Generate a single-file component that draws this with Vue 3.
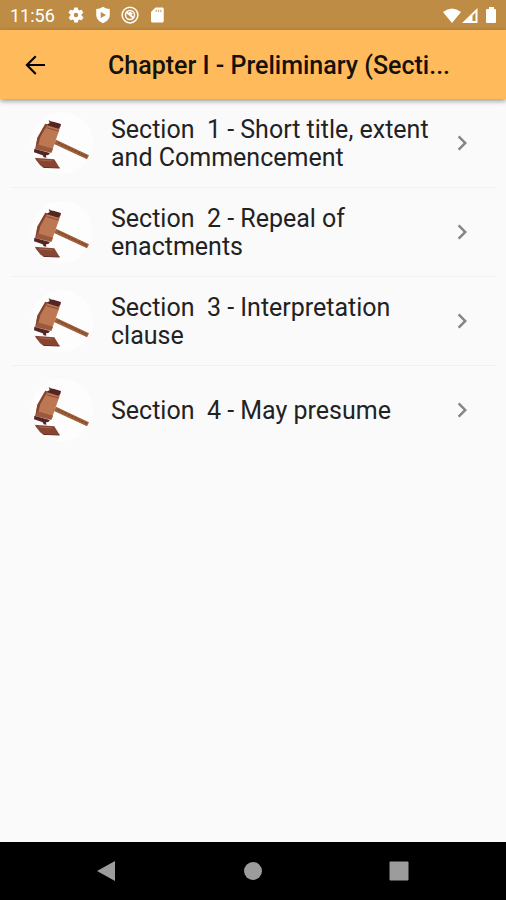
<script setup>
import {ref} from "vue";

const title = "Chapter I - Preliminary (Secti...";

const sections = ref([
    {id: 1, name: "Short title, extent and Commencement"},
    {id: 2, name: "Repeal of enactments"},
    {id: 3, name: "Interpretation clause"},
    {id: 4, name: "May presume"},
]);
</script>

<template>
    <div class="screen">
        <div class="status-bar">
            <span class="clock">11:56</span>
            <svg class="status-icon" viewBox="0 0 24 24">
                <path d="M19.4 13a7.5 7.5 0 0 0 0-2l2.1-1.6a.5.5 0 0 0 .1-.7l-2-3.4a.5.5 0 0 0-.6-.2l-2.5 1a7.3 7.3 0 0 0-1.7-1l-.4-2.6a.5.5 0 0 0-.5-.5h-4a.5.5 0 0 0-.5.5l-.4 2.6a7.3 7.3 0 0 0-1.7 1l-2.5-1a.5.5 0 0 0-.6.2l-2 3.4a.5.5 0 0 0 .1.7L4.6 11a7.5 7.5 0 0 0 0 2l-2.1 1.6a.5.5 0 0 0-.1.7l2 3.4c.1.2.4.3.6.2l2.5-1a7.3 7.3 0 0 0 1.7 1l.4 2.6c0 .3.2.5.5.5h4c.3 0 .5-.2.5-.5l.4-2.6a7.3 7.3 0 0 0 1.7-1l2.5 1c.2.1.5 0 .6-.2l2-3.4a.5.5 0 0 0-.1-.7zM12 15a3 3 0 1 1 0-6 3 3 0 0 1 0 6z"/>
            </svg>
            <svg class="status-icon" viewBox="0 0 24 24">
                <path fill-rule="evenodd" d="M12 1Q8 4 3 4v8c0 5 4 9 9 11 5-2 9-6 9-11V4q-5 0-9-3zM9 8v8l7-4z"/>
            </svg>
            <svg class="status-icon" viewBox="0 0 24 24">
                <g fill="none" stroke="#fff" stroke-width="2">
                    <circle cx="12" cy="12" r="10.5"/>
                    <circle cx="12" cy="12" r="6"/>
                    <path d="M7 8l10 8M11 8l4 3" stroke-width="2.5"/>
                </g>
            </svg>
            <svg class="status-icon" viewBox="0 0 24 24">
                <path d="M19 2h-9L4 8v12c0 1.1.9 2 2 2h13c1.1 0 2-.9 2-2V4c0-1.1-.9-2-2-2z"/>
                <path d="M10 5h2v3h-2zm3 0h2v3h-2zm3 0h2v3h-2z" fill="#d8b98c"/>
            </svg>
            <span class="spacer"></span>
            <svg class="signal-icon" viewBox="0 0 56 18">
                <path d="M1 6Q10-1 19 6l-9 11z"/>
                <path d="M20 17L35.500 2v15zM30.500 15h3V6.500l-3 3z" fill-rule="evenodd"/>
                <path d="M44 4q0-1 1-1h2V1h5v2h1q1 0 1 1v12q0 1-1 1h-8q-1 0-1-1z"/>
            </svg>
        </div>

        <header class="app-bar">
            <button class="back" type="button" aria-label="Back">
                <svg viewBox="0 0 24 24">
                    <path d="M20 11.2H7.5l5.7-5.7L12 4.300 4.300 12l7.700 7.700 1.200-1.200-5.700-5.700H20z"/>
                </svg>
            </button>
            <h1>{{ title }}</h1>
        </header>

        <main>
            <ul class="sections">
                <li v-for="section in sections" :key="section.id">
                    <a href="#" @click.prevent>
                        <span class="avatar">
                            <svg viewBox="63 21 186 186">
                                <path d="M138 104L237 151 231 163 132 117z" fill="#9d6039"/>
                                <path d="M144 113L231 155" fill="none" stroke="#6f3d28" stroke-width="3" stroke-dasharray="7 4"/>
                                <path d="M106 56L150 69 135 112 124 143 76 131 82 98z" fill="#bb7853"/>
                                <path d="M106 56L112 59 91 96 82 133 76 131 82 98z" fill="#84432f"/>
                                <path d="M82 118L129 131 124 143 77 132z" fill="#9a583e"/>
                                <path d="M110 68L146 78" fill="none" stroke="#8c4b37" stroke-width="3"/>
                                <path d="M116 45Q123 51 130 50L153 57 151 66 145 71 109 60 119 54z" fill="#542522"/>
                                <path d="M73 131L120 144 115 150 108 151 109 158 101 157 98 151 72 142z" fill="#542522"/>
                                <path d="M72 158L133 163 149 189 95 187z" fill="#874532"/>
                                <path d="M73 159L95 187 149 189" fill="none" stroke="#612c26" stroke-width="3"/>
                                <path d="M88 165L126 168" fill="none" stroke="#a9644b" stroke-width="3"/>
                            </svg>
                        </span>
                        <span class="name">Section&nbsp; {{ section.id }} - {{ section.name }}</span>
                        <svg class="chevron" viewBox="0 0 24 24">
                            <path d="M10 6L8.600 7.400 13.200 12l-4.600 4.600L10 18l6-6z"/>
                        </svg>
                    </a>
                </li>
            </ul>
        </main>

        <nav class="nav-bar">
            <button type="button" aria-label="Back"><svg viewBox="0 0 24 24"><path d="M20 2v20L2 12z"/></svg></button>
            <button type="button" aria-label="Home"><svg viewBox="0 0 24 24"><circle cx="12" cy="12" r="9"/></svg></button>
            <button type="button" aria-label="Recent apps"><svg viewBox="0 0 24 24"><rect x="2.500" y="2.500" width="19" height="19" rx="1"/></svg></button>
        </nav>
    </div>
</template>

<style>
body {
    margin: 0;
    background: #fafafa;
}
</style>

<style scoped>
.screen {
    display: flex;
    flex-direction: column;
    min-height: 100vh;
    background: #fafafa;
    color: #222;
    font-family: Roboto, "Liberation Sans", sans-serif;
}
svg {
    display: block;
    flex: none;
}
button {
    padding: 0;
    border: 0;
    background: none;
}
.status-bar {
    display: flex;
    align-items: center;
    gap: 9px;
    height: 30px;
    padding: 0 8px 0 10px;
    background: #bf8c45;
    color: #fff;
    fill: #fff;
}
.clock {
    margin-right: 3px;
    font-size: 18px;
}
.status-icon {
    width: 18px;
    height: 18px;
}
.spacer {
    flex: 1;
}
.signal-icon {
    width: 56px;
    height: 18px;
}
.app-bar {
    display: flex;
    align-items: center;
    height: 69px;
    padding: 0 48px 0 20px;
    background: #ffba5c;
    box-shadow: 0 2px 5px rgba(0, 0, 0, .4);
    z-index: 1;
}
.back {
    margin-right: 58px;
}
.back svg {
    width: 30px;
    height: 30px;
}
h1 {
    flex: 1;
    min-width: 0;
    margin: 0;
    padding-top: 2px;
    overflow: hidden;
    color: #15110b;
    font-size: 25px;
    font-weight: 500;
    line-height: 32px;
    white-space: nowrap;
    text-overflow: ellipsis;
}
main {
    flex: 1;
}
.sections {
    margin: 0;
    padding: 0 10px 0 12px;
    list-style: none;
}
.sections li + li {
    border-top: 1px solid #f0f0f0;
}
.sections a {
    display: flex;
    align-items: center;
    min-height: 88px;
    padding: 0 19px;
    box-sizing: border-box;
    color: inherit;
    text-decoration: none;
}
.avatar {
    flex: none;
    margin-right: 18px;
    border-radius: 50%;
    overflow: hidden;
    background: #fdfdfd;
}
.avatar svg {
    width: 62px;
    height: 62px;
}
.name {
    flex: 1;
    padding-top: 2px;
    padding-right: 16px;
    font-size: 25px;
    line-height: 28px;
}
.chevron {
    width: 30px;
    height: 30px;
    fill: #858585;
}
.nav-bar {
    display: flex;
    align-items: center;
    justify-content: space-between;
    height: 58px;
    padding: 0 95px;
    background: #000;
    fill: #9c9c9c;
}
.nav-bar svg {
    width: 24px;
    height: 24px;
}
</style>
